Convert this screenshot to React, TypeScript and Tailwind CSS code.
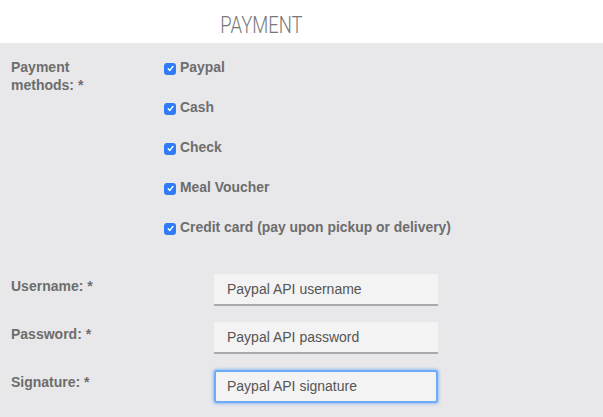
import React from "react";

function Check() {
  return (
    <span className="inline-flex h-[12px] w-[12px] items-center justify-center rounded-[3px] bg-[#2f7df6]">
      <svg width="9" height="9" viewBox="0 0 9 9">
        <path d="M2.2 4.8 L3.8 6.5 L6.9 2.4" fill="none" stroke="white" strokeWidth="1.4" strokeLinecap="round" strokeLinejoin="round" />
      </svg>
    </span>
  );
}

const methods = ["Paypal", "Cash", "Check", "Meal Voucher", "Credit card (pay upon pickup or delivery)"];

export default function App() {
  return (
    <div className="h-[417px] w-[603px] overflow-hidden bg-[#e8e8ea]" style={{ fontFamily: "'Liberation Sans', Arial, sans-serif" }}>
      <div className="flex h-[43px] items-center justify-center bg-white pr-[80px] pt-[6px]">
        <span className="inline-block origin-center scale-x-[0.77] text-[24px] leading-[24px] text-[#777]" style={{ fontFamily: "Roboto, sans-serif", fontWeight: 300 }}>
          PAYMENT
        </span>
      </div>
      <div className="pl-[11px] pt-[15px]">
        <div className="flex">
          <div className="w-[153px] text-[14px] font-bold leading-[18px] text-[#6d6d6d]">
            Payment
            <br />
            methods: *
          </div>
          <div className="flex flex-col">
            {methods.map((m) => (
              <div key={m} className="h-[40px]">
                <div className="flex h-[18px] items-center gap-[4px]">
                  <span className="mt-[3px] flex"><Check /></span>
                  <span className="text-[13.9px] font-bold leading-[18px] text-[#6d6d6d]">{m}</span>
                </div>
              </div>
            ))}
          </div>
        </div>
        <div className="mt-[16px] flex flex-col gap-[16px]">
          {[
            ["Username: *", "Paypal API username", false],
            ["Password: *", "Paypal API password", false],
            ["Signature: *", "Paypal API signature", true],
          ].map(([label, ph, focus]) => (
            <div key={label as string} className="flex">
              <div className="w-[203px] pt-[3px] text-[14px] font-bold leading-[18px] text-[#6d6d6d]">{label}</div>
              <div
                className={
                  focus
                    ? "flex h-[33px] w-[224px] items-center rounded-[3px] border-[2px] border-[#6eabf6] bg-[#f3f3f3] pl-[11px] text-[14px] text-[#555] shadow-[0_0_3px_1px_rgba(90,160,245,0.6)]"
                    : "flex h-[32px] w-[224px] items-center border-b-[2px] border-[#aaaaaa] bg-[#f3f3f3] pl-[13px] text-[14px] text-[#555]"
                }
              >
                {ph}
              </div>
            </div>
          ))}
        </div>
      </div>
    </div>
  );
}
